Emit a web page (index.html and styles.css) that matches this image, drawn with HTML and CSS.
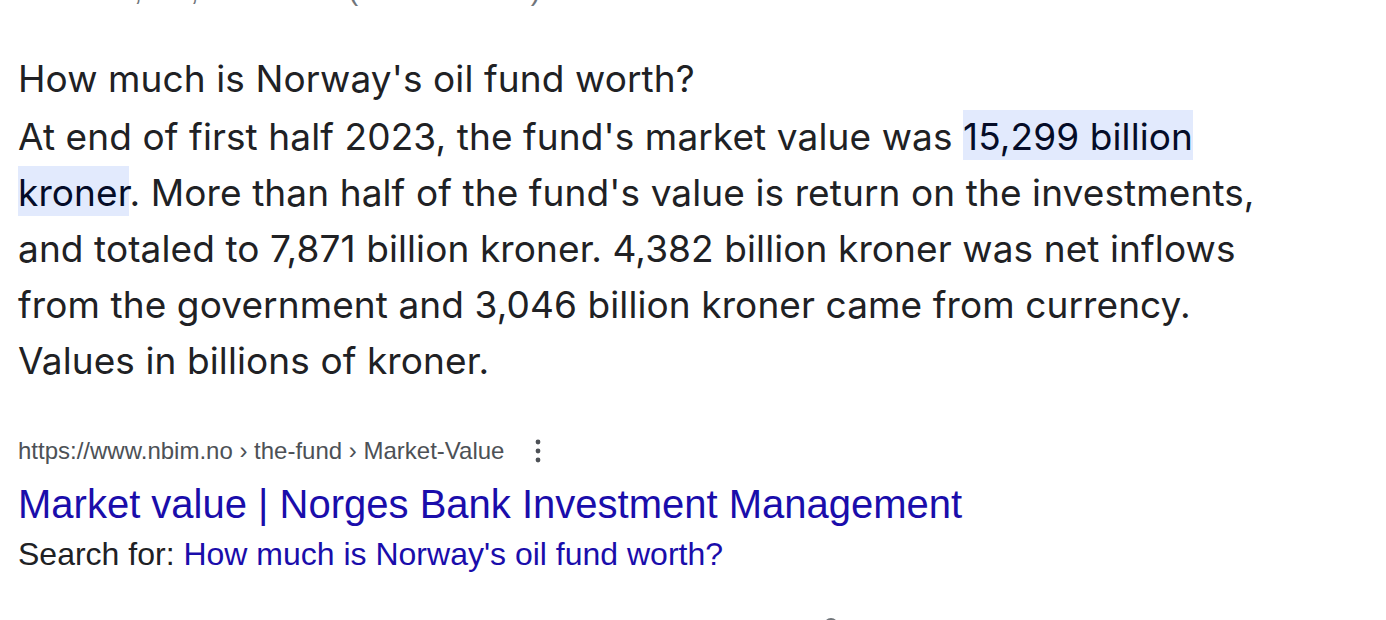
FILE: index.html
```html
<!DOCTYPE html>
<html lang="en">
<head>
<meta charset="utf-8">
<title>How much is Norway's oil fund worth?</title>
<link rel="stylesheet" href="styles.css">
</head>
<body>
<main class="page">
  <div class="stats">About 29,600,000 results (0.41 seconds)</div>
  <section class="snippet">
    <div class="question">How much is Norway's oil fund worth?</div>
    <div class="answer">At end of first half 2023, the fund's market value was <span class="hl">15,299 billion kroner</span>. More than half of the fund's value is return on the investments, and totaled to 7,871 billion kroner. 4,382 billion kroner was net inflows from the government and 3,046 billion kroner came from currency. Values in billions of kroner.</div>
    <div class="source">
      <div class="url-row">
        <cite class="url">https://www.nbim.no › the-fund › Market-Value</cite>
        <span class="more" aria-label="More options">
          <svg width="20" height="30" viewBox="0 0 20 30" aria-hidden="true">
            <circle cx="10" cy="6" r="2.4" fill="#4d5156"/>
            <circle cx="10" cy="15" r="2.4" fill="#4d5156"/>
            <circle cx="10" cy="24" r="2.4" fill="#4d5156"/>
          </svg>
        </span>
      </div>
      <a class="title" href="#">Market value | Norges Bank Investment Management</a>
      <div class="search-for">Search for: <a href="#">How much is Norway's oil fund worth?</a></div>
    </div>
  </section>
  <div class="footer-row"><span class="ring"></span></div>
</main>
</body>
</html>
```
FILE: styles.css
```css
html, body {
  margin: 0;
  padding: 0;
  background: #ffffff;
  overflow: hidden;
}

.page {
  padding-left: 18px;
}

.stats {
  margin-top: -26px;
  height: 32px;
  font-family: "Liberation Sans", Arial, sans-serif;
  font-size: 29px;
  line-height: 32px;
  color: #70757a;
  white-space: nowrap;
}

.question,
.answer {
  font-family: Inter, "Noto Sans", sans-serif;
  font-size: 37px;
  line-height: 56px;
  letter-spacing: 0.1px;
  color: #202124;
}

.question {
  margin-top: 45px;
}

.answer {
  margin-top: 2px;
  max-width: 1270px;
}

.hl {
  background: #e2eafd;
  color: #040c28;
  padding: 4px 0 1px;
}

.source {
  margin-top: 47px;
  display: flex;
  flex-direction: column;
  align-items: flex-start;
}

.url-row {
  display: flex;
  align-items: center;
  height: 30px;
}

.url {
  font-style: normal;
  font-family: "Liberation Sans", Arial, sans-serif;
  font-size: 24px;
  line-height: 30px;
  color: #4d5156;
  white-space: nowrap;
}

.more {
  display: flex;
  margin-left: 24px;
  width: 20px;
  height: 30px;
}

.title {
  margin-top: 15px;
  font-family: "Liberation Sans", Arial, sans-serif;
  font-size: 40px;
  line-height: 46px;
  color: #1a0dab;
  text-decoration: none;
  white-space: nowrap;
}

.search-for {
  margin-top: 8px;
  font-family: "Liberation Sans", Arial, sans-serif;
  font-size: 32px;
  line-height: 38px;
  color: #202124;
  white-space: nowrap;
}

.search-for a {
  color: #1a0dab;
  text-decoration: none;
}

.footer-row {
  margin-top: 45px;
  padding-left: 806px;
  height: 20px;
}

.ring {
  display: block;
  width: 10px;
  height: 10px;
  border: 2px solid #70757a;
  border-radius: 50%;
}
```
